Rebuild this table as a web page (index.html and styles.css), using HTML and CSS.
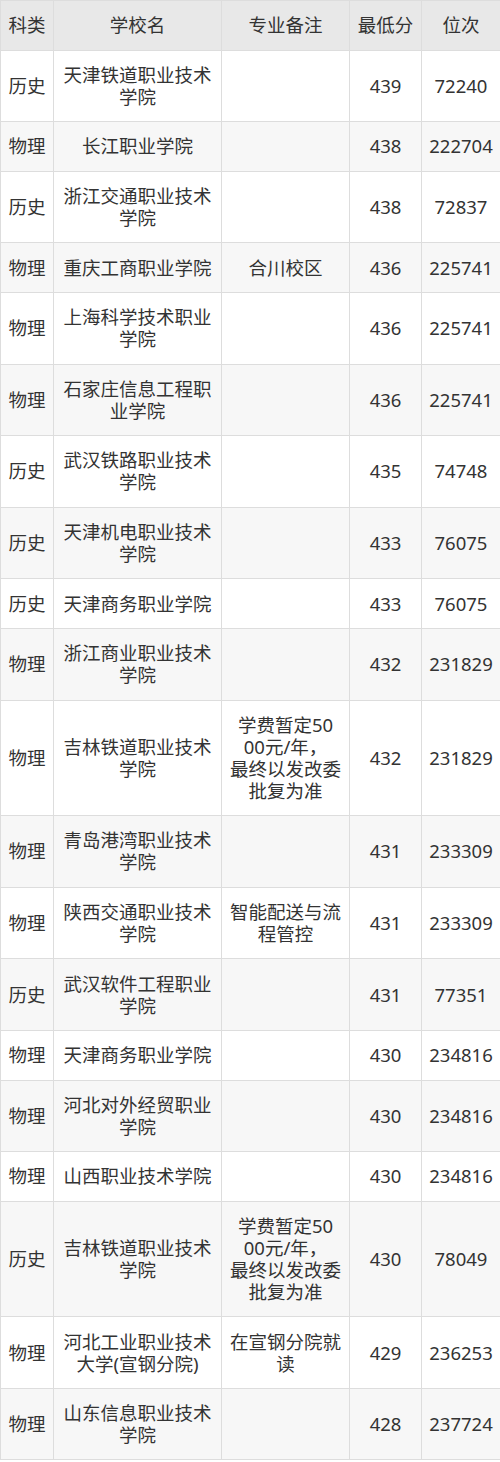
FILE: index.html
```html
<!DOCTYPE html>
<html lang="zh-CN">
<head>
<meta charset="utf-8">
<title>录取分数</title>
<link rel="stylesheet" href="styles.css">
</head>
<body>
<table class="score-table">
  <colgroup>
    <col class="c-type">
    <col class="c-school">
    <col class="c-note">
    <col class="c-score">
    <col class="c-rank">
  </colgroup>
  <thead>
    <tr><th>科类</th><th>学校名</th><th>专业备注</th><th>最低分</th><th>位次</th></tr>
  </thead>
  <tbody>
    <tr><td>历史</td><td>天津铁道职业技术<br>学院</td><td></td><td>439</td><td>72240</td></tr>
    <tr><td>物理</td><td>长江职业学院</td><td></td><td>438</td><td>222704</td></tr>
    <tr><td>历史</td><td>浙江交通职业技术<br>学院</td><td></td><td>438</td><td>72837</td></tr>
    <tr><td>物理</td><td>重庆工商职业学院</td><td>合川校区</td><td>436</td><td>225741</td></tr>
    <tr><td>物理</td><td>上海科学技术职业<br>学院</td><td></td><td>436</td><td>225741</td></tr>
    <tr><td>物理</td><td>石家庄信息工程职<br>业学院</td><td></td><td>436</td><td>225741</td></tr>
    <tr><td>历史</td><td>武汉铁路职业技术<br>学院</td><td></td><td>435</td><td>74748</td></tr>
    <tr><td>历史</td><td>天津机电职业技术<br>学院</td><td></td><td>433</td><td>76075</td></tr>
    <tr><td>历史</td><td>天津商务职业学院</td><td></td><td>433</td><td>76075</td></tr>
    <tr><td>物理</td><td>浙江商业职业技术<br>学院</td><td></td><td>432</td><td>231829</td></tr>
    <tr><td>物理</td><td>吉林铁道职业技术<br>学院</td><td>学费暂定50<br>00元/年，<br>最终以发改委<br>批复为准</td><td>432</td><td>231829</td></tr>
    <tr><td>物理</td><td>青岛港湾职业技术<br>学院</td><td></td><td>431</td><td>233309</td></tr>
    <tr><td>物理</td><td>陕西交通职业技术<br>学院</td><td>智能配送与流<br>程管控</td><td>431</td><td>233309</td></tr>
    <tr><td>历史</td><td>武汉软件工程职业<br>学院</td><td></td><td>431</td><td>77351</td></tr>
    <tr><td>物理</td><td>天津商务职业学院</td><td></td><td>430</td><td>234816</td></tr>
    <tr><td>物理</td><td>河北对外经贸职业<br>学院</td><td></td><td>430</td><td>234816</td></tr>
    <tr><td>物理</td><td>山西职业技术学院</td><td></td><td>430</td><td>234816</td></tr>
    <tr><td>历史</td><td>吉林铁道职业技术<br>学院</td><td>学费暂定50<br>00元/年，<br>最终以发改委<br>批复为准</td><td>430</td><td>78049</td></tr>
    <tr><td>物理</td><td>河北工业职业技术<br>大学(宣钢分院)</td><td>在宣钢分院就<br>读</td><td>429</td><td>236253</td></tr>
    <tr><td>物理</td><td>山东信息职业技术<br>学院</td><td></td><td>428</td><td>237724</td></tr>
  </tbody>
</table>
</body>
</html>
```

FILE: styles.css
```css
html, body {
  margin: 0;
  padding: 0;
  background: #ffffff;
}

.score-table {
  width: 500px;
  table-layout: fixed;
  border-collapse: collapse;
  font-family: "Noto Sans", "Noto Sans CJK SC", sans-serif;
  font-size: 18.5px;
  line-height: 22px;
  color: #333333;
}

.c-type { width: 53px; }
.c-school { width: 168px; }
.c-note { width: 128px; }
.c-score { width: 72px; }
.c-rank { width: 79px; }

.score-table th,
.score-table td {
  border: 1px solid #dddddd;
  padding: 13.3px 4px;
  text-align: center;
  vertical-align: middle;
  white-space: nowrap;
  font-weight: normal;
}

.score-table thead th {
  background: #e8e8e8;
}

.score-table tbody tr:nth-child(even) td {
  background: #f7f7f7;
}
```
